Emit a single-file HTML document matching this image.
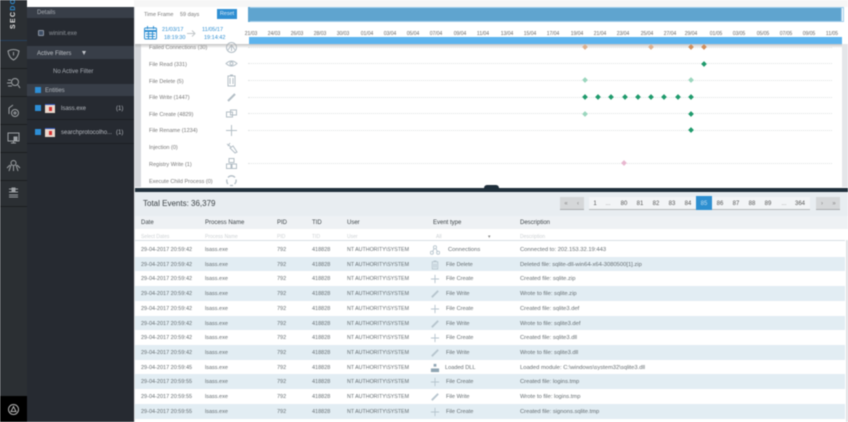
<!DOCTYPE html>
<html><head><meta charset="utf-8">
<style>
html,body{margin:0;padding:0;width:848px;height:422px;overflow:hidden;background:#fff}
body{font-family:"Liberation Sans",sans-serif;font-size:6px;color:#555;position:relative}
#w{position:absolute;left:0;top:0;width:848px;height:422px;overflow:hidden;filter:blur(.5px)}
#w div,#w span,#w svg{position:absolute;white-space:nowrap}
#w b{font-weight:bold}
.sep{left:0;width:27px;height:1px;background:#1b1e21}
.rico{left:6px;width:15px;height:15px;fill:none;stroke:#9da1a4;stroke-width:1}
.lab{left:149px;font-size:5.500px;color:#777;line-height:8px}
.dl{left:248px;width:584px;height:0;border-top:1px dotted #dfe2e2}
.d{width:4px;height:4px;transform:rotate(45deg);background:#1f9a6c}
.o{background:#cf8f5e}.lo{background:#dcb08f}.lg{background:#9ad6bd}.pk{background:#e8b7cf}
.tk{top:31px;font-size:5px;color:#666;transform:translateX(-50%)}
.ti{left:225px;width:13px;height:13px;fill:none;stroke:#b3bec6;stroke-width:1}
.r{left:135px;width:710px;height:15px;background:#fff;font-size:5.500px;line-height:16px;color:#666e72}
.r.b{background:#e2edf3}
.r span{top:0}
.a{left:6px}.p{left:70px}.i{left:142px}.t{left:177px}.u{left:212px;font-size:5.300px}.e{left:311px;font-size:5.600px}.x{left:385px;font-size:5.800px}
.ei{left:295px;top:3px;width:10px;height:10px;fill:none;stroke:#b7c5ce;stroke-width:1}
.h{top:219px;font-size:6px;color:#3f464a;line-height:8px}
.f{top:234px;font-size:5px;color:#cdd1d4;line-height:7px}
.n{top:200px;font-size:6px;line-height:8px;color:#555;transform:translateX(-50%)}
</style></head><body><div id="w">

<!-- left rail -->
<div style="left:0;top:0;width:27px;height:396px;background:#2b2f33"></div>
<div style="left:0;top:396px;width:27px;height:26px;background:#000"></div>
<div style="left:-1.500px;top:10px;width:30px;height:8px;transform:rotate(-90deg);font-size:7px;font-weight:bold;line-height:8px;color:#e0e0e0;letter-spacing:1.300px">SEC<b style="color:#2d8bd0">DO</b></div>
<div style="left:0;top:40px;width:27px;height:1px;background:#26405c"></div>
<div class="sep" style="top:68px"></div><div class="sep" style="top:96px"></div><div class="sep" style="top:124px"></div><div class="sep" style="top:152px"></div><div class="sep" style="top:180px"></div><div class="sep" style="top:206px"></div>
<svg class="rico" style="top:47px" viewBox="0 0 15 15"><path d="M2 4Q7.500 1 13 4Q12 11 7.500 13Q3 11 2 4ZM7.500 5V8.500"/></svg>
<svg class="rico" style="top:75px" viewBox="0 0 15 15"><circle cx="9" cy="7" r="3.500"/><path d="M12 10L14 13M2 5H5M1 8H5M2 11H6"/></svg>
<svg class="rico" style="top:103px" viewBox="0 0 15 15"><circle cx="9" cy="10" r="3.500"/><circle cx="9" cy="10" r="1"/><path d="M3 11V5L7 2"/></svg>
<svg class="rico" style="top:130px" viewBox="0 0 15 15"><rect x="2" y="3" width="11" height="8"/><path d="M5 13H10M7.500 11V13"/><rect x="8" y="7" width="3" height="3" fill="#9da1a4"/></svg>
<svg class="rico" style="top:158px" viewBox="0 0 15 15"><circle cx="7.500" cy="5" r="2.500"/><path d="M3 13L5 7M12 13L10 7M7.500 8V13M1 10L4 7M14 10L11 7"/></svg>
<svg class="rico" style="top:185px" viewBox="0 0 15 15"><path d="M3 4H12M3 7H12M3 10H12M3 12H12"/><rect x="6" y="3" width="3" height="3" fill="#9da1a4"/></svg>
<svg style="left:7px;top:402px;width:13px;height:15px;fill:none;stroke:#b0b0b0;stroke-width:1" viewBox="0 0 13 15"><circle cx="6.500" cy="7.500" r="5"/><path d="M6.500 4.500L9 9.500H4Z"/></svg>

<!-- side panel -->
<div style="left:27px;top:7px;width:107px;height:415px;background:#262a31"></div>
<div style="left:27px;top:7px;width:107px;height:11px;background:#383e48"></div>
<div style="left:37px;top:9px;font-size:6px;line-height:8px;color:#a8adb4">Details</div>
<div style="left:38px;top:30px;width:6px;height:6px;border-radius:1px;background:#3c4c63;border:1px solid #8b93a0;box-sizing:border-box"></div>
<div style="left:49px;top:30px;font-size:6px;line-height:8px;color:#8f949a">wininit.exe</div>
<div style="left:27px;top:46px;width:107px;height:13px;background:#383e48"></div>
<div style="left:37px;top:50px;font-size:6px;line-height:8px;color:#c0c4c9">Active Filters</div>
<div style="left:82px;top:51px;width:0;height:0;border-left:2.500px solid transparent;border-right:2.500px solid transparent;border-top:4px solid #c0c4c9"></div>
<div style="left:53px;top:68px;font-size:6px;line-height:8px;color:#a8adb4">No Active Filter</div>
<div style="left:27px;top:84px;width:107px;height:12px;background:#383e48"></div>
<div style="left:35px;top:87px;width:6px;height:6px;background:#2d8ed6"></div>
<div style="left:45px;top:87px;font-size:6px;line-height:8px;color:#b0b5bb">Entities</div>
<div style="left:35px;top:105px;width:6px;height:6px;background:#2d8ed6"></div>
<div style="left:45px;top:104px;width:10px;height:9px;background:#e8d8cc;border-top:1px solid #2d55c0;box-sizing:border-box"></div>
<div style="left:49px;top:107px;width:3px;height:4px;background:#d83030"></div>
<div style="left:61px;top:105px;font-size:6px;line-height:8px;color:#b5b9bf">lsass.exe</div>
<div style="left:116px;top:105px;font-size:6px;line-height:8px;color:#b5b9bf">(1)</div>
<div style="left:27px;top:119px;width:107px;height:1px;background:#1b1e24"></div>
<div style="left:35px;top:129px;width:6px;height:6px;background:#2d8ed6"></div>
<div style="left:45px;top:128px;width:10px;height:9px;background:#e8d8cc;border-top:1px solid #2d55c0;box-sizing:border-box"></div>
<div style="left:49px;top:131px;width:3px;height:4px;background:#d83030"></div>
<div style="left:61px;top:129px;font-size:6px;line-height:8px;color:#b5b9bf">searchprotocolho...</div>
<div style="left:116px;top:129px;font-size:6px;line-height:8px;color:#b5b9bf">(1)</div>
<div style="left:27px;top:143px;width:107px;height:1px;background:#1b1e24"></div>

<!-- main top -->
<div style="left:134px;top:0;width:714px;height:7px;background:#f6f6f6"></div>
<div style="left:134px;top:7px;width:1px;height:415px;background:#e2e4e6"></div>
<div style="left:135px;top:44px;width:6px;height:143px;background:#d6d8dc"></div>
<div style="left:842px;top:44px;width:6px;height:143px;background:#e4e6e9"></div>
<div style="left:135px;top:7px;width:713px;height:37px;background:#fff"></div>
<div style="left:144px;top:11px;font-size:5.500px;line-height:8px;color:#777">Time Frame</div>
<div style="left:180px;top:11px;font-size:5.500px;line-height:8px;color:#777">59 days</div>
<div style="left:217px;top:9px;width:20px;height:10px;background:#2f8fd2;color:#dbeaf6;font-size:5.500px;line-height:10px;text-align:center">Reset</div>
<div style="left:248px;top:7px;width:594px;height:15px;background:#5fa4cf;border-top:1px solid #9fcdeb;border-bottom:1px solid #9fcdeb;box-sizing:border-box"></div>
<div style="left:248px;top:7px;width:2px;height:15px;background:#fff;border:1px solid #5fa4cf;box-sizing:border-box"></div>
<div style="left:841px;top:7px;width:3px;height:15px;background:#fff;border:1px solid #9fcdeb;box-sizing:border-box"></div>
<svg style="left:143px;top:25px;width:15px;height:15px;fill:none;stroke:#2f8fd2;stroke-width:1" viewBox="0 0 15 15"><rect x="1.500" y="3" width="12" height="11" rx="1"/><path d="M1.500 6H13.500" stroke-width="2"/><path d="M4.500 1V4M10.500 1V4M3 9H12M3 11.500H12M5.500 7V14M9.500 7V14"/></svg>
<div style="left:162px;top:26px;font-size:5.500px;line-height:8px;color:#2f8fd2">21/03/17</div>
<div style="left:164px;top:34px;font-size:5.500px;line-height:8px;color:#2f8fd2">18:19:30</div>
<svg style="left:187px;top:29px;width:9px;height:9px;fill:none;stroke:#c2c6c9;stroke-width:1" viewBox="0 0 9 9"><path d="M0 4.500H8M5 1.500L8 4.500L5 7.500"/></svg>
<div style="left:202px;top:26px;font-size:5.500px;line-height:8px;color:#2f8fd2">11/05/17</div>
<div style="left:204px;top:34px;font-size:5.500px;line-height:8px;color:#2f8fd2">19:14:42</div>
<span class="tk" style="left:251px">21/03</span><span class="tk" style="left:274px">24/03</span><span class="tk" style="left:297px">26/03</span><span class="tk" style="left:320px">28/03</span><span class="tk" style="left:343px">30/03</span><span class="tk" style="left:367px">01/04</span><span class="tk" style="left:390px">03/04</span><span class="tk" style="left:413px">05/04</span><span class="tk" style="left:436px">07/04</span><span class="tk" style="left:460px">09/04</span><span class="tk" style="left:483px">11/04</span><span class="tk" style="left:507px">13/04</span><span class="tk" style="left:530px">15/04</span><span class="tk" style="left:553px">17/04</span><span class="tk" style="left:577px">19/04</span><span class="tk" style="left:600px">21/04</span><span class="tk" style="left:623px">23/04</span><span class="tk" style="left:647px">25/04</span><span class="tk" style="left:670px">27/04</span><span class="tk" style="left:691px">29/04</span><span class="tk" style="left:716px">01/05</span><span class="tk" style="left:739px">03/05</span><span class="tk" style="left:763px">05/05</span><span class="tk" style="left:786px">07/05</span><span class="tk" style="left:809px">09/05</span><span class="tk" style="left:832px">11/05</span>
<div style="left:249px;top:37px;width:593px;height:7px;background:#5db4ee"></div>

<!-- timeline rows -->
<div class="lab" style="top:44px">Failed Connections (30)</div>
<div class="lab" style="top:61px">File Read (331)</div>
<div class="lab" style="top:78px">File Delete (5)</div>
<div class="lab" style="top:94px">File Write (1447)</div>
<div class="lab" style="top:111px">File Create (4829)</div>
<div class="lab" style="top:127px">File Rename (1234)</div>
<div class="lab" style="top:144px">Injection (0)</div>
<div class="lab" style="top:161px">Registry Write (1)</div>
<div class="lab" style="top:178px">Execute Child Process (0)</div>
<svg class="ti" style="top:41px" viewBox="0 0 13 13"><circle cx="6.500" cy="6.500" r="5"/><path d="M3 9L6.500 4L10 9M6.500 4V10"/></svg>
<svg class="ti" style="top:57px" viewBox="0 0 13 13"><path d="M1 6.500Q6.500 1.500 12 6.500Q6.500 11.500 1 6.500Z"/><circle cx="6.500" cy="6.500" r="1.500"/></svg>
<svg class="ti" style="top:74px" viewBox="0 0 13 13"><path d="M3 2H10V12H3ZM5 1H8M5 4V10M8 4V10"/></svg>
<svg class="ti" style="top:91px;stroke-width:2" viewBox="0 0 13 13"><path d="M3 10L10 3"/></svg>
<svg class="ti" style="top:107px" viewBox="0 0 13 13"><rect x="1.500" y="5" width="6" height="5"/><rect x="5.500" y="3" width="6" height="5"/></svg>
<svg class="ti" style="top:124px" viewBox="0 0 13 13"><path d="M6.500 1V12M1 6.500H12"/></svg>
<svg class="ti" style="top:141px" viewBox="0 0 13 13"><path d="M2 3L6 6M5 2L3 5M5 7L8 5L12 11L10 12Z"/></svg>
<svg class="ti" style="top:157px" viewBox="0 0 13 13"><rect x="4" y="1.500" width="5" height="4"/><rect x="1.500" y="7" width="4.500" height="4.500"/><rect x="7" y="7" width="4.500" height="4.500"/></svg>
<svg class="ti" style="top:174px" viewBox="0 0 13 13"><path d="M3 3.500A4.500 4.500 0 0 1 10 3.500M11 5.500A4.500 4.500 0 0 1 9.500 10M3 10A4.500 4.500 0 0 1 2 5.500M5 11.500H8" stroke-width="1.300"/></svg>
<div style="left:135px;top:44px;width:707px;height:4px;background:linear-gradient(rgba(170,170,170,.7),rgba(255,255,255,0))"></div>

<div class="dl" style="top:47px"></div><div class="dl" style="top:63px"></div><div class="dl" style="top:80px"></div><div class="dl" style="top:97px"></div><div class="dl" style="top:113px"></div><div class="dl" style="top:130px"></div><div class="dl" style="top:163px"></div>
<div class="d lo" style="left:583px;top:45px"></div><div class="d lo" style="left:649px;top:45px"></div><div class="d o" style="left:689px;top:45px"></div><div class="d o" style="left:702px;top:45px"></div>
<div class="d" style="left:702px;top:61.500px"></div>
<div class="d lg" style="left:583px;top:78px"></div><div class="d lg" style="left:689px;top:78px"></div>
<div class="d" style="left:583px;top:95px"></div><div class="d" style="left:596px;top:95px"></div><div class="d" style="left:609px;top:95px"></div><div class="d" style="left:623px;top:95px"></div><div class="d" style="left:636px;top:95px"></div><div class="d" style="left:649px;top:95px"></div><div class="d" style="left:662px;top:95px"></div><div class="d" style="left:676px;top:95px"></div><div class="d" style="left:689px;top:95px"></div>
<div class="d lg" style="left:583px;top:111.500px"></div><div class="d" style="left:689px;top:111.500px"></div>
<div class="d" style="left:689px;top:128px"></div>
<div class="d pk" style="left:622px;top:161px"></div>

<!-- table header -->
<div style="left:135px;top:188px;width:713px;height:4px;background:#1f2f3b"></div>
<div style="left:484px;top:185px;width:15px;height:5px;border-radius:3px 3px 0 0;background:#1f2f3b"></div>
<div style="left:135px;top:192px;width:713px;height:24px;background:#e8edf1"></div>
<div style="left:143px;top:198px;font-size:8px;line-height:11px;color:#3c4246">Total Events: 36,379</div>
<div style="left:560px;top:197px;width:24px;height:12px;background:#d5d7d9;border-bottom:1px solid #a9adb0"></div>
<span class="n" style="left:566px;color:#888">«</span><span class="n" style="left:578px;color:#888">‹</span>
<div style="left:589px;top:209px;width:221px;height:1px;background:#b4b8bb"></div>
<div style="left:589px;top:197px;width:221px;height:12px;background:#f2f4f6"></div>
<div style="left:696px;top:196px;width:16px;height:14px;background:#2e8fd0"></div>
<span class="n" style="left:595px">1</span><span class="n" style="left:608px;color:#999">...</span><span class="n" style="left:624px">80</span><span class="n" style="left:640px">81</span><span class="n" style="left:656px">82</span><span class="n" style="left:672px">83</span><span class="n" style="left:688px">84</span><span class="n" style="left:704px;color:#bcdcf3">85</span><span class="n" style="left:720px">86</span><span class="n" style="left:736px">87</span><span class="n" style="left:752px">88</span><span class="n" style="left:768px">89</span><span class="n" style="left:784px;color:#999">...</span><span class="n" style="left:800px">364</span>
<div style="left:816px;top:197px;width:24px;height:12px;background:#d5d7d9;border-bottom:1px solid #a9adb0"></div>
<span class="n" style="left:822px;color:#888">›</span><span class="n" style="left:834px;color:#888">»</span>

<div style="left:135px;top:216px;width:713px;height:13px;background:#eef1f4"></div>
<div style="left:135px;top:240px;width:710px;height:1px;background:#d8dfe4"></div>
<span class="h" style="left:141px">Date</span><span class="h" style="left:205px">Process Name</span><span class="h" style="left:277px">PID</span><span class="h" style="left:312px">TID</span><span class="h" style="left:347px">User</span><span class="h" style="left:433px">Event type</span><span class="h" style="left:520px">Description</span>
<span class="f" style="left:141px">Select Dates</span><span class="f" style="left:205px">Process Name</span><span class="f" style="left:277px">PID</span><span class="f" style="left:312px">TID</span><span class="f" style="left:347px">User</span><span class="f" style="left:436px">All</span><span class="f" style="left:488px;color:#888">▾</span><span class="f" style="left:520px">Description</span>

<!-- rows -->
<div class="r" style="top:242px"><span class="a">29-04-2017 20:59:42</span><span class="p">lsass.exe</span><span class="i">792</span><span class="t">418828</span><span class="u">NT AUTHORITY\SYSTEM</span><svg class="ei" viewBox="0 0 11 11"><circle cx="5.500" cy="2.500" r="1.700"/><circle cx="2" cy="8.500" r="1.700"/><circle cx="9" cy="8.500" r="1.700"/><path d="M4.500 4L3 7M6.500 4L8 7"/></svg><span class="e" style="left:313px;font-size:5.800px">Connections</span><span class="x">Connected to: 202.153.32.19:443</span></div>
<div class="r b" style="top:256.700px"><span class="a">29-04-2017 20:59:42</span><span class="p">lsass.exe</span><span class="i">792</span><span class="t">418828</span><span class="u">NT AUTHORITY\SYSTEM</span><svg class="ei" viewBox="0 0 11 11"><path d="M2.500 2H8.500V10H2.500ZM4 1H7M4.500 4V8.500M6.500 4V8.500"/></svg><span class="e">File Delete</span><span class="x">Deleted file: sqlite-dll-win64-x64-3080500[1].zip</span></div>
<div class="r" style="top:271.400px"><span class="a">29-04-2017 20:59:42</span><span class="p">lsass.exe</span><span class="i">792</span><span class="t">418828</span><span class="u">NT AUTHORITY\SYSTEM</span><svg class="ei" viewBox="0 0 11 11"><path d="M5.500 1V10M1 5.500H10"/></svg><span class="e">File Create</span><span class="x">Created file: sqlite.zip</span></div>
<div class="r b" style="top:286.100px"><span class="a">29-04-2017 20:59:42</span><span class="p">lsass.exe</span><span class="i">792</span><span class="t">418828</span><span class="u">NT AUTHORITY\SYSTEM</span><svg class="ei" style="stroke-width:2" viewBox="0 0 11 11"><path d="M2 9L9 2"/></svg><span class="e">File Write</span><span class="x">Wrote to file: sqlite.zip</span></div>
<div class="r" style="top:300.800px"><span class="a">29-04-2017 20:59:42</span><span class="p">lsass.exe</span><span class="i">792</span><span class="t">418828</span><span class="u">NT AUTHORITY\SYSTEM</span><svg class="ei" viewBox="0 0 11 11"><path d="M5.500 1V10M1 5.500H10"/></svg><span class="e">File Create</span><span class="x">Created file: sqlite3.def</span></div>
<div class="r b" style="top:315.500px"><span class="a">29-04-2017 20:59:42</span><span class="p">lsass.exe</span><span class="i">792</span><span class="t">418828</span><span class="u">NT AUTHORITY\SYSTEM</span><svg class="ei" style="stroke-width:2" viewBox="0 0 11 11"><path d="M2 9L9 2"/></svg><span class="e">File Write</span><span class="x">Wrote to file: sqlite3.def</span></div>
<div class="r" style="top:330.200px"><span class="a">29-04-2017 20:59:42</span><span class="p">lsass.exe</span><span class="i">792</span><span class="t">418828</span><span class="u">NT AUTHORITY\SYSTEM</span><svg class="ei" viewBox="0 0 11 11"><path d="M5.500 1V10M1 5.500H10"/></svg><span class="e">File Create</span><span class="x">Created file: sqlite3.dll</span></div>
<div class="r b" style="top:344.900px"><span class="a">29-04-2017 20:59:42</span><span class="p">lsass.exe</span><span class="i">792</span><span class="t">418828</span><span class="u">NT AUTHORITY\SYSTEM</span><svg class="ei" style="stroke-width:2" viewBox="0 0 11 11"><path d="M2 9L9 2"/></svg><span class="e">File Write</span><span class="x">Wrote to file: sqlite3.dll</span></div>
<div class="r" style="top:359.600px"><span class="a">29-04-2017 20:59:45</span><span class="p">lsass.exe</span><span class="i">792</span><span class="t">418828</span><span class="u">NT AUTHORITY\SYSTEM</span><svg class="ei" style="fill:#8fa5b3;stroke:none" viewBox="0 0 11 11"><rect x="4" y="1" width="3" height="3"/><path d="M1 6H10V10H1Z"/></svg><span class="e" style="left:310px">Loaded DLL</span><span class="x">Loaded module: C:\windows\system32\sqlite3.dll</span></div>
<div class="r b" style="top:374.300px"><span class="a">29-04-2017 20:59:55</span><span class="p">lsass.exe</span><span class="i">792</span><span class="t">418828</span><span class="u">NT AUTHORITY\SYSTEM</span><svg class="ei" viewBox="0 0 11 11"><path d="M5.500 1V10M1 5.500H10"/></svg><span class="e">File Create</span><span class="x">Created file: logins.tmp</span></div>
<div class="r" style="top:389px"><span class="a">29-04-2017 20:59:55</span><span class="p">lsass.exe</span><span class="i">792</span><span class="t">418828</span><span class="u">NT AUTHORITY\SYSTEM</span><svg class="ei" style="stroke-width:2" viewBox="0 0 11 11"><path d="M2 9L9 2"/></svg><span class="e">File Write</span><span class="x">Wrote to file: logins.tmp</span></div>
<div class="r b" style="top:403.700px"><span class="a">29-04-2017 20:59:55</span><span class="p">lsass.exe</span><span class="i">792</span><span class="t">418828</span><span class="u">NT AUTHORITY\SYSTEM</span><svg class="ei" viewBox="0 0 11 11"><path d="M5.500 1V10M1 5.500H10"/></svg><span class="e">File Create</span><span class="x">Created file: signons.sqlite.tmp</span></div>
<div style="left:846px;top:240px;width:2px;height:182px;background:#e0e3e5"></div>
</div></body></html>
